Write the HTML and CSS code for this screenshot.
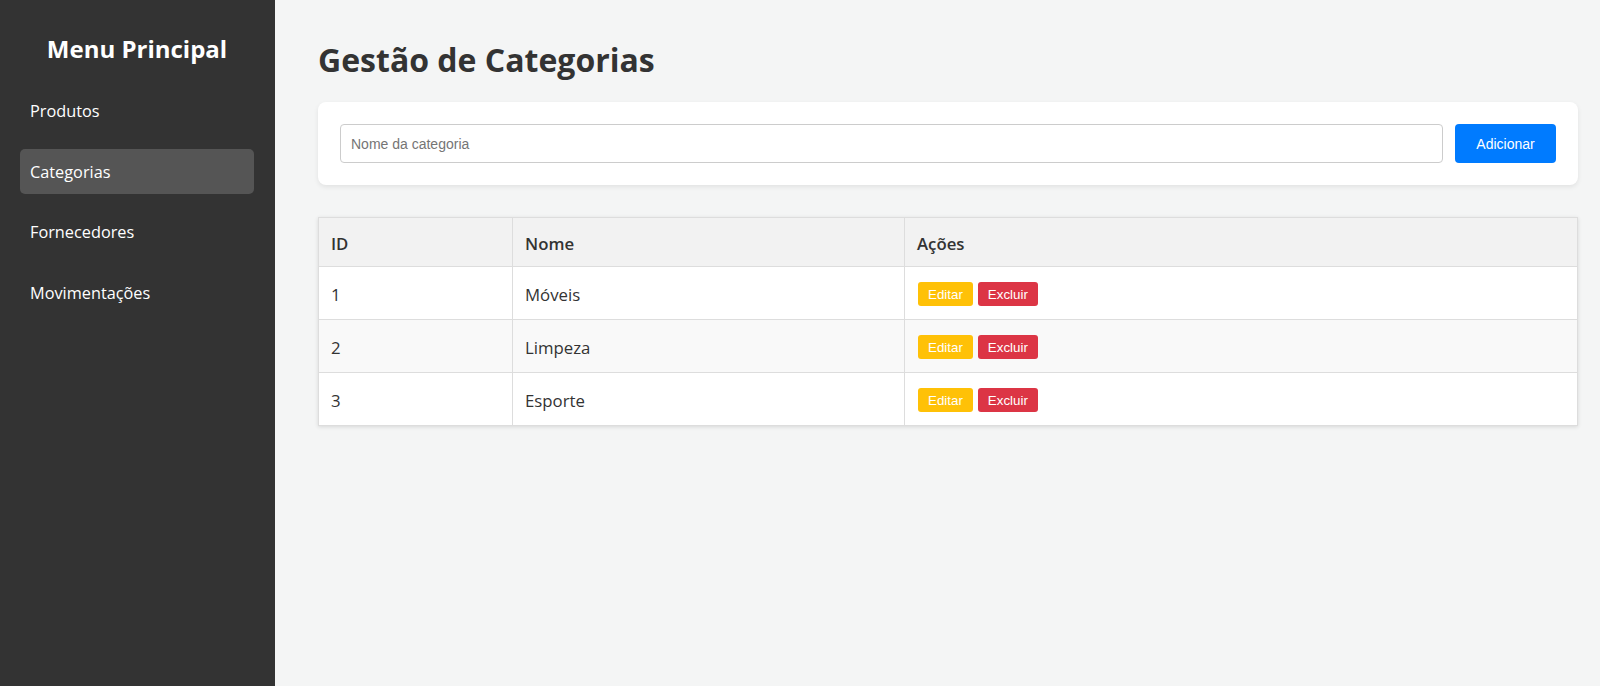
FILE: index.html
```html
<!DOCTYPE html>
<html lang="pt-BR">
<head>
<meta charset="utf-8">
<title>Gestão de Categorias</title>
<link rel="stylesheet" href="styles.css">
</head>
<body>
  <aside class="sidebar">
    <h2 class="sidebar-title">Menu Principal</h2>
    <nav class="nav">
      <a class="nav-item" href="#">Produtos</a>
      <a class="nav-item active" href="#">Categorias</a>
      <a class="nav-item" href="#">Fornecedores</a>
      <a class="nav-item" href="#">Movimentações</a>
    </nav>
  </aside>
  <main class="main">
    <h1 class="page-title">Gestão de Categorias</h1>
    <section class="card form-card">
      <input class="text-input" type="text" placeholder="Nome da categoria">
      <button class="btn btn-primary" type="button">Adicionar</button>
    </section>
    <table class="data-table">
      <colgroup>
        <col class="col-id">
        <col class="col-name">
        <col class="col-actions">
      </colgroup>
      <thead>
        <tr><th>ID</th><th>Nome</th><th>Ações</th></tr>
      </thead>
      <tbody>
        <tr>
          <td>1</td><td>Móveis</td>
          <td><div class="actions"><button class="btn-sm btn-edit" type="button">Editar</button><button class="btn-sm btn-delete" type="button">Excluir</button></div></td>
        </tr>
        <tr>
          <td>2</td><td>Limpeza</td>
          <td><div class="actions"><button class="btn-sm btn-edit" type="button">Editar</button><button class="btn-sm btn-delete" type="button">Excluir</button></div></td>
        </tr>
        <tr>
          <td>3</td><td>Esporte</td>
          <td><div class="actions"><button class="btn-sm btn-edit" type="button">Editar</button><button class="btn-sm btn-delete" type="button">Excluir</button></div></td>
        </tr>
      </tbody>
    </table>
  </main>
</body>
</html>
```

FILE: styles.css
```css
* { box-sizing: border-box; }

html, body {
  margin: 0;
  height: 100%;
}

body {
  display: flex;
  font-family: "Open Sans", "Noto Sans", "DejaVu Sans", sans-serif;
  color: #333;
  background: #f4f5f5;
}

.sidebar {
  width: 275px;
  flex: 0 0 275px;
  min-height: 100vh;
  background: #333;
  color: #fff;
  padding: 0 21px 20px 20px;
}

.sidebar-title {
  margin: 33px 0 23px;
  font-size: 24px;
  line-height: 32px;
  font-weight: 700;
  text-align: center;
}

.nav {
  display: flex;
  flex-direction: column;
  gap: 15.5px;
}

.nav-item {
  display: block;
  height: 45px;
  line-height: 46px;
  padding: 0 10px;
  border-radius: 5px;
  color: #fff;
  text-decoration: none;
  font-size: 16.3px;
}

.nav-item.active {
  background: #555;
}

.main {
  flex: 1;
  padding: 0 22px 20px 43px;
}

.page-title {
  margin: 40px 0 22px 0;
  font-size: 32px;
  line-height: 40px;
  font-weight: 700;
  color: #333;
}

.card {
  background: #fff;
  border-radius: 8px;
  box-shadow: 0 2px 5px rgba(0, 0, 0, 0.08);
}

.form-card {
  display: flex;
  gap: 12px;
  padding: 22px;
}

.text-input {
  flex: 1;
  height: 39px;
  padding: 0 10px;
  border: 1px solid #ccc;
  border-radius: 4px;
  font-family: "Liberation Sans", Arial, sans-serif;
  font-size: 14px;
  color: #333;
}

.text-input::placeholder { color: #757575; }

.btn {
  height: 39px;
  border: none;
  border-radius: 4px;
  font-family: "Liberation Sans", Arial, sans-serif;
  font-size: 14px;
  cursor: pointer;
}

.btn-primary {
  width: 101px;
  background: #007bff;
  color: #fff;
}

.data-table {
  width: 100%;
  margin-top: 32px;
  border-collapse: collapse;
  background: #fff;
  box-shadow: 0 1px 4px rgba(0, 0, 0, 0.12);
  font-size: 16.8px;
}

.col-id { width: 194px; }
.col-name { width: 392px; }

.data-table th,
.data-table td {
  border: 1px solid #ddd;
  padding: 0 12px;
  padding-top: 2px;
  text-align: left;
}

.data-table th {
  height: 49px;
  background: #f2f2f2;
  font-weight: 600;
}

.data-table td {
  height: 53px;
}

.data-table tbody tr:nth-child(even) td {
  background: #f9f9f9;
}

.actions {
  display: flex;
  gap: 5px;
  padding-left: 1px;
}

.btn-sm {
  height: 24px;
  padding: 0 10px;
  border: none;
  border-radius: 3px;
  color: #fff;
  font-family: "Liberation Sans", Arial, sans-serif;
  font-size: 13.33px;
  cursor: pointer;
}

.btn-edit { background: #ffc107; }
.btn-delete { background: #dc3545; }
```
